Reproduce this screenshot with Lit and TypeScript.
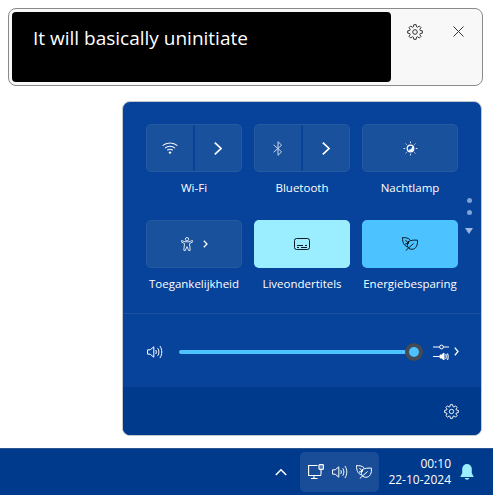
import { LitElement, html, css } from "lit";
import { customElement } from "lit/decorators.js";

const gearPath = (() => {
  const pts: string[] = [];
  const teeth = 8;
  for (let i = 0; i < teeth; i++) {
    const a = (i / teeth) * Math.PI * 2 - Math.PI / 2;
    const w = Math.PI / teeth;
    const p = (r: number, t: number) => `${(8 + r * Math.cos(t)).toFixed(2)} ${(8 + r * Math.sin(t)).toFixed(2)}`;
    pts.push(`${i === 0 ? "M" : "L"}${p(5.4, a - w * 0.75)}L${p(7.4, a - w * 0.4)}L${p(7.4, a + w * 0.4)}L${p(5.4, a + w * 0.75)}`);
  }
  return pts.join("") + "Z";
})();

const gear = (s: number, c: string) => html`<svg width=${s} height=${s} viewBox="0 0 16 16" fill="none" stroke=${c} stroke-width="1" stroke-linejoin="round"><path d=${gearPath} /><circle cx="8" cy="8" r="2.300"/></svg>`;

const chevron = (w: number, h: number, sw: number) => html`<svg width=${w} height=${h} viewBox="0 0 ${w} ${h}" fill="none" stroke="#fff" stroke-width=${sw}><path d="M.8 .7L${w - 1} ${h / 2}L.8 ${h - 0.7}"/></svg>`;

const wifi = html`<svg width="16" height="12" viewBox="0 0 16 12" fill="none" stroke="#f0f4fb" stroke-width="1.100"><path d="M.6 3.700c4-3.700 10.800-3.700 14.800 0M3 6.100c2.800-2.500 7.200-2.500 10 0M5.300 8.300c1.600-1.300 3.800-1.300 5.400 0"/><circle cx="8" cy="10.600" r="1.200" fill="#fff" stroke="none"/></svg>`;
const bt = html`<svg width="10" height="15" viewBox="0 0 10 15" fill="none" stroke="#c9d6ea" stroke-width="1"><path d="M.6 3.800l8 7L5 14.300V.7l3.600 3.500-8 7"/></svg>`;
const night = html`<svg width="15" height="15" viewBox="0 0 15 15" fill="none"><circle cx="7.500" cy="7.500" r="3.300" stroke="#fff" stroke-width="1.200"/><path d="M9.200 4.900a3.200 3.200 0 0 1 0 5.200 3.200 3.200 0 0 1-3.900-1.400c2 .3 4-1.500 3.900-3.800z" fill="#fff"/><path d="M7.500 .6v1.600M7.500 12.800v1.600M.6 7.500h1.600M12.800 7.500h1.600M2.600 2.600l1 1M11.400 11.400l1 1M12.400 2.600l-1 1M3.600 11.400l-1 1" stroke="#dfe8f5" stroke-width="1"/></svg>`;
const access = html`<svg width="12" height="14" viewBox="0 0 12 14" fill="none" stroke="#f0f4fb" stroke-width=".9"><circle cx="6" cy="2.200" r="1.700"/><path d="M.6 3.500l3.400 1.300h4l3.400-1.300.4 1.300L8.500 6.600l.7 6.700-1.500.3L6 9.600l-1.700 4-1.500-.3.700-6.700L.2 4.800z"/></svg>`;
const caption = html`<svg width="16" height="12" viewBox="0 0 16 12" fill="none" stroke="#0c1a26" stroke-width="1"><rect x=".5" y=".5" width="15" height="11" rx="2"/><path d="M3 7.500h6M11 7.500h2M3 9.500h2M7 9.500h6" stroke-width="1"/></svg>`;
const leaf = (c: string) => html`<svg width="16" height="14" viewBox="0 0 16 14" fill="none" stroke=${c} stroke-width="1" stroke-linejoin="round"><path d="M5.500 9.800C2 9 .5 5.400 .5 .6c3 0 5.800 .2 7.700 2.300"/><path d="M5.800 4.800c3-1.700 6.500-1.900 9.700-1.600 .3 4.500-1.200 9-5.600 9.100-2.500 0-4.300-1.500-4.500-3.800-.1-1.400 0-2.500 .4-3.700z"/><path d="M3.800 13.500L11.500 6.500M3.500 3l3 3.500M3 7l3.300-.5M6.500 4l0 2.500"/></svg>`;
const speaker = (c: string) => html`<svg width="16" height="14" viewBox="0 0 16 14" fill="none" stroke=${c} stroke-width="1"><path d="M.6 4.800h2.600L6.800 1.800v10.400L3.200 9.200H.6z"/><path d="M8.700 5c.8 1.200.8 2.800 0 4M10.700 3.200c1.600 2.200 1.600 5.400 0 7.600M12.900 1c2.500 3.600 2.500 8.400 0 12"/></svg>`;
const mixer = html`<svg width="16" height="16" viewBox="0 0 16 16" fill="none" stroke="#fff" stroke-width="1"><path d="M0 3h6.500M10.500 3H16"/><circle cx="8.500" cy="3" r="1.900"/><path d="M0 12.500h6.500"/><path d="M7 11h1.500L11 9v7l-2.500-2H7z" fill="#fff"/><path d="M12.700 10c.6 1.500 .6 3.500 0 5M14.500 9.500c.8 2 .8 4.500 0 6.500" stroke-width="1.100"/></svg>`;
const network = html`<svg width="16" height="16" viewBox="0 0 16 16" fill="none" stroke="#fff" stroke-width="1.100"><path d="M9.500 1.500H.6v10h12v-1"/><path d="M6 11.500v3M3 14.500h6.500"/><rect x="11" y=".6" width="4.400" height="4.800" rx=".6" fill="#fff" fill-opacity=".25"/><path d="M13 5.500v5"/></svg>`;

@customElement("app-root")
export class AppRoot extends LitElement {
  static styles = css`
    :host {
      display: flex;
      flex-direction: column;
      width: 493px;
      height: 495px;
      background: #fff;
      overflow: hidden;
      font-family: "Open Sans", "Noto Sans", sans-serif;
    }
    .caption {
      box-sizing: border-box;
      margin: 8px 10px 0 8px;
      height: 78px;
      border: 1px solid #8a8a8a;
      border-radius: 8px;
      background: #f8f8f8;
      padding: 3px;
      display: flex;
    }
    .video {
      width: 379px;
      height: 70px;
      background: #000;
      border-radius: 4px;
      color: #fff;
      font-size: 19px;
      line-height: 26px;
      padding: 13px 0 0 21px;
      box-sizing: border-box;
    }
    .tools {
      display: flex;
      gap: 30px;
      padding: 12px 0 0 16px;
      align-items: flex-start;
    }
    .close { margin-top: 2px; }
    .panel {
      box-sizing: border-box;
      margin: 15px 11px 0 122px;
      width: 360px;
      height: 336px;
      border: 1px solid #c4c8ce;
      border-radius: 8px;
      background: #07439a;
      display: flex;
      flex-direction: column;
      overflow: hidden;
    }
    .quick {
      position: relative;
      height: 212px;
      box-sizing: border-box;
      padding: 22px 0 0 23px;
      border-bottom: 1px solid #1c519f;
      display: grid;
      grid-template-columns: repeat(3, 96px);
      grid-auto-rows: 96px;
      column-gap: 12px;
    }
    .cell {
      display: flex;
      flex-direction: column;
      align-items: center;
    }
    .btn {
      box-sizing: border-box;
      width: 96px;
      height: 48px;
      flex: none;
      border-radius: 5px;
      display: flex;
      align-items: center;
      justify-content: center;
      background: #1a519d;
      border: 1px solid #26599f;
    }
    .btn.on { border: none; }
    .btn.sky { background: #9beeff; }
    .btn.blue { background: #4cc2ff; }
    .half {
      flex: 1;
      height: 100%;
      display: flex;
      align-items: center;
      justify-content: center;
    }
    .half + .half { border-left: 2px solid #07439a; }
    .combo { gap: 10px; }
    .label {
      margin-top: 8px;
      color: #fff;
      font-size: 11.500px;
      line-height: 16px;
      white-space: nowrap;
      font-weight: 500;
    }
    .pager {
      position: absolute;
      left: 342px;
      top: 96px;
      display: flex;
      flex-direction: column;
      align-items: center;
      gap: 7px;
    }
    .dot { width: 5px; height: 5px; border-radius: 50%; background: #7fa2d6; }
    .tri {
      margin-top: 6px;
      width: 0;
      height: 0;
      border-left: 4.500px solid transparent;
      border-right: 4.500px solid transparent;
      border-top: 6px solid #9db8e0;
    }
    .volume {
      height: 73px;
      box-sizing: border-box;
      display: flex;
      align-items: center;
      padding: 2px 0 0 24px;
    }
    .track {
      flex: none;
      width: 235px;
      margin-left: 16px;
      height: 4px;
      border-radius: 2px;
      background: #4cc2ff;
      position: relative;
    }
    .thumb {
      position: absolute;
      right: -9px;
      top: -7px;
      box-sizing: border-box;
      width: 18px;
      height: 18px;
      border-radius: 50%;
      background: #4cc2ff;
      border: 4px solid #454a54;
    }
    .mix {
      margin-left: 19px;
      display: flex;
      align-items: center;
      gap: 5px;
    }
    .foot {
      flex: 1;
      background: #003a8c;
      display: flex;
      align-items: center;
      justify-content: flex-end;
      padding: 0 22px 0 0;
    }
    .taskbar {
      margin-top: 12px;
      height: 47px;
      background: #003a8c;
      border-top: 1px solid #2a5590;
      box-sizing: border-box;
      display: flex;
      align-items: center;
      color: #fff;
    }
    .up { margin-left: 275px; display: flex; }
    .tray {
      margin-left: 13px;
      width: 79px;
      height: 40px;
      border-radius: 5px;
      background: #1a4d97;
      display: flex;
      align-items: center;
      justify-content: center;
      gap: 8px;
    }
    .clock {
      width: 72px;
      text-align: right;
      font-size: 12px;
      line-height: 16.500px;
      font-weight: 500;
    }
    .bell { margin-left: 9px; display: flex; }
  `;

  private cell(label: string, cls: string, body: unknown) {
    return html`<div class="cell"><div class="btn ${cls}">${body}</div><div class="label">${label}</div></div>`;
  }

  render() {
    const split = (icon: unknown) => html`<div class="half">${icon}</div><div class="half">${chevron(8, 13, 1.700)}</div>`;
    return html`
      <div class="caption">
        <div class="video">It will basically uninitiate</div>
        <div class="tools">
          ${gear(16, "#333")}
          <svg class="close" width="11" height="11" viewBox="0 0 11 11" stroke="#333" stroke-width="1"><path d="M.5 .5l10 10M10.500 .5l-10 10"/></svg>
        </div>
      </div>
      <div class="panel">
        <div class="quick">
          ${this.cell("Wi-Fi", "", split(wifi))}
          ${this.cell("Bluetooth", "", split(bt))}
          ${this.cell("Nachtlamp", "", night)}
          ${this.cell("Toegankelijkheid", "combo", html`${access}${chevron(5, 8, 1.300)}`)}
          ${this.cell("Liveondertitels", "on sky", caption)}
          ${this.cell("Energiebesparing", "on blue", leaf("#0c1a26"))}
          <div class="pager"><div class="dot"></div><div class="dot"></div><div class="tri"></div></div>
        </div>
        <div class="volume">
          ${speaker("#fff")}
          <div class="track"><div class="thumb"></div></div>
          <div class="mix">${mixer}${chevron(5, 9, 1.300)}</div>
        </div>
        <div class="foot">${gear(15, "#fff")}</div>
      </div>
      <div class="taskbar">
        <div class="up"><svg width="12" height="8" viewBox="0 0 12 8" fill="none" stroke="#fff" stroke-width="1.600"><path d="M.8 7l5.200-5.200L11.200 7"/></svg></div>
        <div class="tray">${network}${speaker("#fff")}${leaf("#fff")}</div>
        <div class="clock">00:10<br />22-10-2024</div>
        <div class="bell"><svg width="14" height="17" viewBox="0 0 14 17" fill="#9beeff"><path d="M7 0a4.800 4.800 0 0 0-4.800 4.800V9L.3 13h13.400L11.800 9V4.800A4.800 4.800 0 0 0 7 0z"/><path d="M4.600 14a2.500 2.500 0 0 0 4.800 0z"/></svg></div>
      </div>
    `;
  }
}
